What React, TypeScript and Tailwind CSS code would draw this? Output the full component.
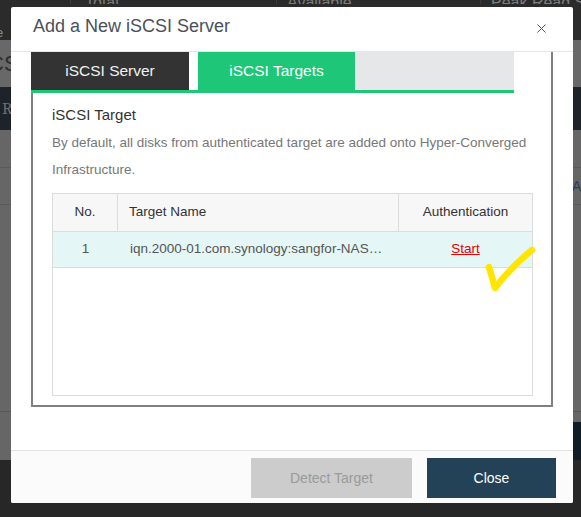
import { X } from 'lucide-react'

const font = { fontFamily: '"Liberation Sans", Arial, sans-serif' }

// Dimmed storage page that sits behind the dialog
function BackdropPage() {
  return (
    <div className="flex h-full w-full flex-col">
      <div className="flex h-[40px] flex-col bg-[#2b2b2b]">
        <div className="-mt-[9px] flex h-[17px] overflow-hidden text-[16px] leading-[17px] text-[#7d7d7d]">
          <div className="w-[71px] shrink-0 border-r border-[#3c3c3c]" />
          <div className="w-[206px] shrink-0 border-r border-[#3c3c3c] pl-[14px] pt-[3px]">Total</div>
          <div className="w-[204px] shrink-0 border-r border-[#3c3c3c] pl-[10px] pt-[3px]">Available</div>
          <div className="min-w-0 flex-1 whitespace-nowrap pl-[10px] pt-[3px]">Peak Read Speed</div>
        </div>
        <div className="mt-[22px] -ml-[4px] text-[13px] leading-[14px] text-[#8a8a8a]">e</div>
      </div>
      <div className="flex h-[47px] items-center bg-[#686868]">
        <span className="-ml-[12px] text-[22px] text-[#2e2e2e]">CSI</span>
      </div>
      <div className="flex h-[43px] items-center bg-[#1d2329]">
        <span className="ml-[2px] font-serif text-[17px] text-[#6f6f6f]">R</span>
      </div>
      <div className="h-[38px] border-b border-[#5a5a5a] bg-[#666666]" />
      <div className="flex h-[37px] items-center justify-end border-b border-[#5a5a5a] bg-[#666666]">
        <span className="-mr-[8px] text-[14px] text-[#2c3e57]">Ag</span>
      </div>
      <div className="h-[207px] border-b border-[#585858] bg-[#666666]" />
      <div className="flex h-[48px] justify-end bg-[#666666] pt-[10px]">
        <div className="h-[40px] w-[20px] bg-[#101d26]" />
      </div>
      <div className="flex-1 bg-[#272727]" />
    </div>
  )
}

function TargetTable() {
  return (
    <div className="relative mt-[10px] h-[203px] border border-[#dcdcdc] text-[13.5px]">
      <div className="flex h-[38px] border-b border-[#dcdcdc] bg-[#f7f7f7] text-[#333]">
        <div className="flex w-[65px] items-center justify-center border-r border-[#dcdcdc]">No.</div>
        <div className="flex w-[281px] items-center border-r border-[#dcdcdc] pl-[11px]">Target Name</div>
        <div className="flex flex-1 items-center justify-center">Authentication</div>
      </div>
      <div className="flex h-[36px] border-b border-[#dcdcdc] bg-[#e5f6f6] text-[#555]">
        <div className="flex w-[65px] items-center justify-center">1</div>
        <div className="flex w-[281px] items-center pl-[12px] pr-[15px]">
          <span className="truncate">iqn.2000-01.com.synology:sangfor-NAS.Target-1.4b2e6c1f0a</span>
        </div>
        <div className="flex flex-1 items-center justify-center">
          <a href="#" className="text-[#e60000] underline">Start</a>
        </div>
      </div>
      {/* highlighter tick drawn over the row */}
      <svg className="absolute left-[430px] top-[50px]" width="56" height="52" viewBox="0 0 56 52" fill="none">
        <path
          d="M6 23 Q9 33 12 44 Q27 24 49 6"
          stroke="#ffe500"
          strokeWidth="6.5"
          strokeLinecap="round"
          strokeLinejoin="round"
        />
      </svg>
    </div>
  )
}

export default function App() {
  return (
    <div className="relative h-[517px] w-[581px] overflow-hidden" style={font}>
      <BackdropPage />

      <div className="absolute left-[11px] top-[7px] flex h-[496px] w-[562px] flex-col overflow-hidden rounded-[2px] bg-white">
        <div className="flex h-[45px] justify-between border-b border-[#e5e5e5] pl-[22px] pr-[24px]">
          <h2 className="pt-[8px] text-[18px] leading-[22px] text-[#4a505c]">Add a New iSCSI Server</h2>
          <button className="mt-[14px] h-[14px] text-[#555]">
            <X size={15} strokeWidth={1.6} />
          </button>
        </div>

        <div className="h-[398px] px-[20px]">
          <div className="flex h-[355px] w-[522px] flex-col border-b-2 border-r-2 border-[#808080]">
            <div className="flex h-[38px] w-[483px] text-[15.5px]">
              <div className="flex w-[158px] items-center justify-center bg-[#333333] text-[#f0f0f0]">iSCSI Server</div>
              <div className="w-[9px] bg-white" />
              <div className="flex w-[157px] items-center justify-center bg-[#1ec677] text-white">iSCSI Targets</div>
              <div className="flex-1 bg-[#e6e7e8]" />
            </div>
            <div className="h-[3px] w-[483px] bg-[#1ec677]" />

            <div className="flex-1 border-l-2 border-[#808080] pl-[19px] pr-[18px] pt-[12px]">
              <div className="text-[15px] leading-[20px] text-[#333]">iSCSI Target</div>
              <p className="mt-[4px] text-[13.5px] leading-[27px] text-[#777]">
                By default, all disks from authenticated target are added onto Hyper-Converged Infrastructure.
              </p>
              <TargetTable />
            </div>
          </div>
        </div>

        <div className="flex h-[53px] justify-end gap-[15px] border-t border-[#e3e3e3] bg-[#fbfbfb] pr-[17px] pt-[7px] text-[14px]">
          <button className="h-[40px] w-[161px] bg-[#cccccc] text-[#9a9a9a]">Detect Target</button>
          <button className="h-[40px] w-[129px] bg-[#234257] text-white">Close</button>
        </div>
      </div>
    </div>
  )
}
